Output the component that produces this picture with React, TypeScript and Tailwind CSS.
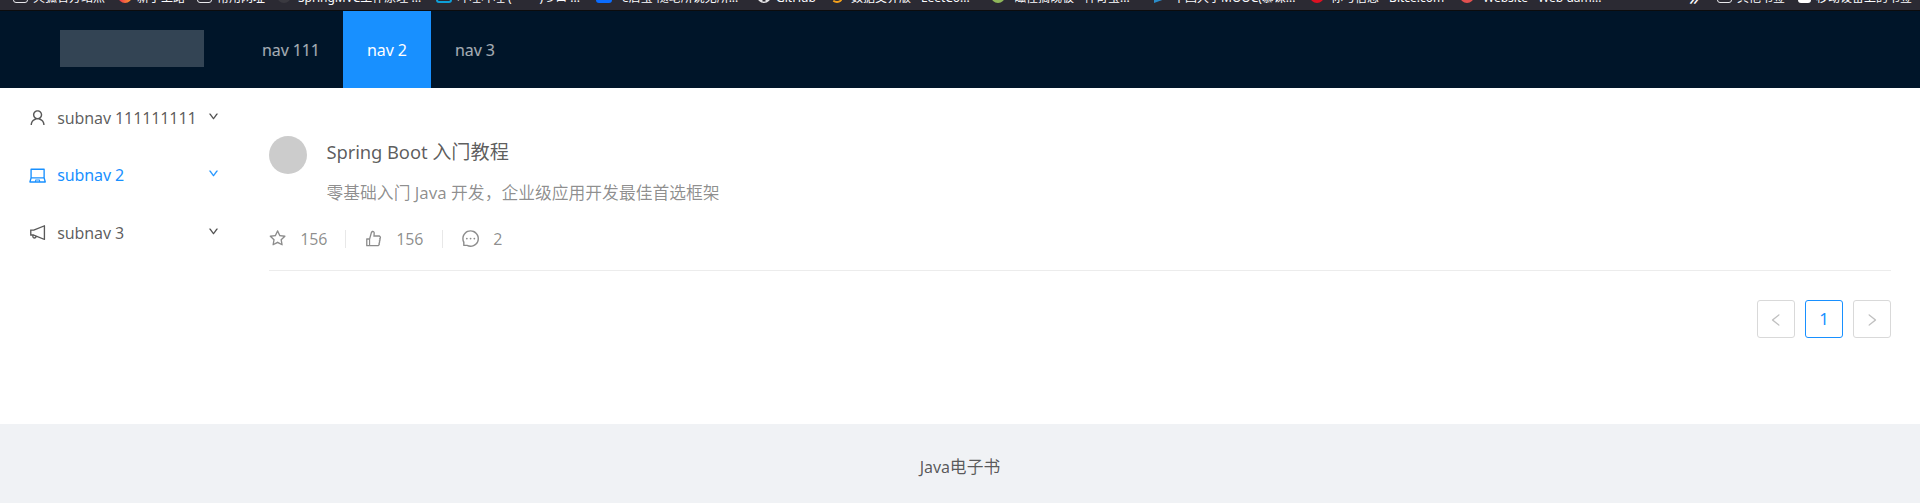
import type { ReactNode } from 'react';
import {
  AiOutlineUser,
  AiOutlineLaptop,
  AiOutlineNotification,
  AiOutlineStar,
  AiOutlineLike,
  AiOutlineMessage,
  AiOutlineLeft,
  AiOutlineRight,
  AiOutlineDown,
} from 'react-icons/ai';

const Folder = () => (
  <span className="block h-[14px] w-[15px] rounded-[3px] border-[1.5px] border-[#e8e8ec]" />
);

const Dot = ({ className }: { className: string }) => (
  <span className={`block size-[14px] rounded-full ${className}`} />
);

const Globe = () => (
  <svg viewBox="0 0 14 14" className="size-[14px]">
    <circle cx="7" cy="7" r="7" fill="#e4e4e6" />
    <path d="M5.500 12.500v-2q1.500-1 3 0v2z" fill="#2b2a33" />
  </svg>
);

const bookmarks: { icon: ReactNode; text: string; box: string }[] = [
  { icon: <Folder />, text: '火狐官方站点', box: 'w-[105px]' },
  { icon: <Dot className="bg-linear-to-r from-[#e6194b] to-[#ff9a1f]" />, text: '新手上路', box: 'w-[79px]' },
  { icon: <Folder />, text: '常用网址', box: 'w-[80px]' },
  { icon: <Dot className="mr-[2px] bg-[#3a3940]" />, text: 'SpringMVC工作原理 ...', box: 'w-[159px]' },
  { icon: <span className="block h-[14px] w-[16px] rounded-[3px] border-2 border-[#0e9fd8]" />, text: '哔哩哔哩 (゜-゜)つロ ...', box: 'w-[160px]' },
  { icon: <span className="mr-[5px] block h-[15px] w-[16px] rounded-[3px] bg-[#0a6cff]" />, text: 'e店宝-随笔所说无所...', box: 'w-[161px]' },
  { icon: <Globe />, text: 'GitHub', box: 'w-[74px]' },
  { icon: <span className="mr-[3px] block size-[12px] rounded-full border-2 border-[#f5a11c] border-l-transparent" />, text: '数据交界版 - LeetCo...', box: 'w-[160px]' },
  { icon: <Dot className="mr-[4px] bg-[#8fb65a]" />, text: '磁性搞砚板 - 神奇宝...', box: 'w-[163px]' },
  { icon: <span className="mr-[4px] block h-[12px] w-[10px] bg-[#2b8cc9] [clip-path:polygon(0_0,100%_70%,0_100%)]" />, text: '中国大学MOOC(慕课...', box: 'w-[156px]' },
  { icon: <Dot className="mr-[2px] bg-[#dd1122]" />, text: '你与信息 - Bitce.com', box: 'w-[150px]' },
  { icon: <Dot className="mr-[4px] bg-[#e2504f]" />, text: 'Website - Web·dam...', box: 'w-[224px]' },
  { icon: null, text: '»', box: 'w-[33px] text-[20px]' },
  { icon: <Folder />, text: '其他书签', box: 'w-[81px]' },
  { icon: <span className="block h-[14px] w-[13px] rounded-[3px] border-[3px] border-white" />, text: '移动设备上的书签', box: 'w-[120px]' },
];

const BookmarkBar = () => (
  <div className="flex h-[11px] shrink-0 items-end overflow-hidden border-b border-[#0c0c0d] bg-[#2b2a33] pl-[13px] font-['Noto_Sans','Noto_Sans_CJK_SC',sans-serif] text-[12px] leading-[16px] tracking-normal text-[#fbfbfe]">
    {bookmarks.map((b) => (
      <div key={b.box + b.text} className={`flex h-[25px] shrink-0 items-start gap-[5px] ${b.box}`}>
        <div className="flex h-[18px] items-end">{b.icon}</div>
        <span className="mt-[5px] block whitespace-nowrap">{b.text}</span>
      </div>
    ))}
  </div>
);

const navs = [
  { text: 'nav 111', box: 'w-[105px] text-white/65' },
  { text: 'nav 2', box: 'w-[88px] bg-[#1890ff] text-white' },
  { text: 'nav 3', box: 'w-[88px] text-white/65' },
];

const subnavs = [
  { text: 'subnav 111111111', Icon: AiOutlineUser, color: 'text-black/65' },
  { text: 'subnav 2', Icon: AiOutlineLaptop, color: 'text-[#1890ff]' },
  { text: 'subnav 3', Icon: AiOutlineNotification, color: 'text-black/65' },
];

export default function App() {
  return (
    <div className="flex h-[503px] w-[1920px] flex-col overflow-hidden bg-white font-['Noto_Sans','Noto_Sans_CJK_SC',sans-serif] text-[16px] leading-[26px] tracking-[-0.1px] text-black/65">
      <BookmarkBar />
      <header className="flex h-[77px] shrink-0 bg-[#001529] pl-[60px]">
        <div className="mt-[19px] h-[37px] w-[144px] bg-[#334454]" />
        <nav className="ml-[34px] flex">
          {navs.map((n) => (
            <a key={n.text} className={`flex h-[77px] items-center pl-6 ${n.box}`}>
              {n.text}
            </a>
          ))}
        </nav>
      </header>

      <div className="flex h-[336px] shrink-0">
        <aside className="flex w-[240px] flex-col gap-[9.4px] pt-[6px]">
          {subnavs.map(({ text, Icon, color }) => (
            <a key={text} className={`flex h-[48px] items-center pr-[21px] pl-[28px] ${color}`}>
              <Icon className="size-[19.2px] shrink-0" />
              <span className="ml-[10px] flex-1 whitespace-nowrap">{text}</span>
              <AiOutlineDown className="mb-[3px] size-[11px] shrink-0 [stroke-width:40] stroke-current" />
            </a>
          ))}
        </aside>

        <main className="flex flex-1 flex-col pt-[48px] pr-[29px] pl-[29px]">
          <div className="flex h-[76px] gap-[19.5px]">
            <div className="size-[38px] rounded-full bg-[#cccccc]" />
            <div className="flex flex-col pt-px">
              <h4 className="h-[29px] text-[18.4px] leading-[29px]">
                Spring Boot <span className="text-[19.2px] tracking-normal">入门教程</span>
              </h4>
              <p className="mt-[14px] h-[26px] text-[16.8px] tracking-normal text-black/45">
                零基础入门 Java 开发，企业级应用开发最佳首选框架
              </p>
            </div>
          </div>
          <div className="mt-[14px] flex h-[26px] items-center text-black/45">
            <div className="flex w-[77px] items-center border-r border-[#e8e8e8] leading-[17px]">
              <AiOutlineStar className="-my-px mr-[13px] -ml-px size-[19.2px]" />156
            </div>
            <div className="ml-[19px] flex w-[78px] items-center border-r border-[#e8e8e8] leading-[17px]">
              <AiOutlineLike className="-my-px mr-[13px] -ml-px size-[19.2px]" />156
            </div>
            <div className="ml-[19px] flex items-center leading-[17px]">
              <AiOutlineMessage className="-my-px mr-[13px] -ml-px size-[19.2px]" />2
            </div>
          </div>
          <div className="mt-[18px] h-px bg-[#ececec]" />
          <div className="mt-[29px] flex justify-end gap-[10px]">
            <button className="flex size-[38px] items-center justify-center rounded-[3px] border border-[#d9d9d9] text-black/25">
              <AiOutlineLeft className="mt-[2px] size-[16px]" />
            </button>
            <button className="flex size-[38px] items-center justify-center rounded-[3px] border border-[#1890ff] text-[16.8px] text-[#1890ff]">
              1
            </button>
            <button className="flex size-[38px] items-center justify-center rounded-[3px] border border-[#d9d9d9] text-black/25">
              <AiOutlineRight className="mt-[2px] size-[16px]" />
            </button>
          </div>
        </main>
      </div>

      <footer className="flex flex-1 justify-center bg-[#f0f2f5] pt-[30px]">
        <span>
          Java<span className="text-[16.8px] tracking-normal">电子书</span>
        </span>
      </footer>
    </div>
  );
}
